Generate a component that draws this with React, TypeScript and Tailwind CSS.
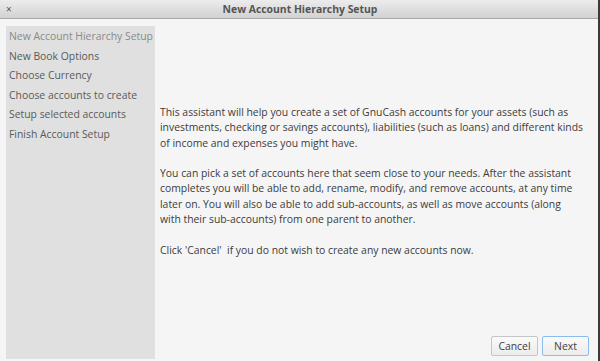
import React from "react";

const steps = [
  "New Account Hierarchy Setup",
  "New Book Options",
  "Choose Currency",
  "Choose accounts to create",
  "Setup selected accounts",
  "Finish Account Setup",
];

const lines = [
  "This assistant will help you create a set of GnuCash accounts for your assets (such as",
  "investments, checking or savings accounts), liabilities (such as loans) and different kinds",
  "of income and expenses you might have.",
  "",
  "You can pick a set of accounts here that seem close to your needs. After the assistant",
  "completes you will be able to add, rename, modify, and remove accounts, at any time",
  "later on. You will also be able to add sub-accounts, as well as move accounts (along",
  "with their sub-accounts) from one parent to another.",
  "",
  "Click 'Cancel'  if you do not wish to create any new accounts now.",
];

export default function App() {
  return (
    <div
      className="w-[600px] h-[361px] flex flex-col bg-[#f5f5f5] overflow-hidden relative"
      style={{ fontFamily: '"Open Sans", "Noto Sans", sans-serif' }}
    >
      <div className="h-[19px] flex items-center relative bg-gradient-to-b from-[#ececec] to-[#d2d2d2] border-b border-[#a8a8a8] shrink-0">
        <span className="absolute left-[6px] top-[2px] text-[10px] text-[#555] leading-[14px]">×</span>
        <div className="flex-1 text-center text-[10.4px] font-bold text-[#555555] leading-[18px]">
          New Account Hierarchy Setup
        </div>
      </div>
      <div className="flex flex-1 min-h-0 pr-[2px]">
        <div className="w-[149px] ml-[6px] mt-[7px] mb-[2px] bg-[#e0e0e0] pt-[1px] flex flex-col">
          {steps.map((s, i) => (
            <div
              key={s}
              className={`pl-[3px] h-[19.6px] leading-[19.6px] text-[10.4px] whitespace-nowrap ${
                i === 0 ? "text-[#8a8a8a]" : "text-[#5a5a5a]"
              }`}
            >
              {s}
            </div>
          ))}
        </div>
        <div className="flex-1 flex flex-col min-w-0">
          <div className="flex-1 pl-[5px] pr-[4px] pt-[86px] text-[10.4px] leading-[15.3px] text-[#3c3c3c]">
            {lines.map((l, i) => (
              <div key={i} className="h-[15.3px] whitespace-pre">
                {l}
              </div>
            ))}
          </div>
          <div className="flex justify-end gap-[4px] pr-[9px] pb-[5px]">
            <button className="w-[47px] h-[20px] border border-[#c6c6c6] rounded-[2px] bg-gradient-to-b from-[#fafafa] to-[#ececec] text-[10.4px] text-[#404040] leading-none">
              Cancel
            </button>
            <button className="w-[47px] h-[20px] border border-[#8cbcec] rounded-[2px] bg-gradient-to-b from-[#fafafa] to-[#ececec] text-[10.4px] text-[#404040] leading-none">
              Next
            </button>
          </div>
        </div>
      </div>
      <div className="absolute right-0 top-0 bottom-0 w-[2px] bg-[#3a3a3a]" />
    </div>
  );
}
